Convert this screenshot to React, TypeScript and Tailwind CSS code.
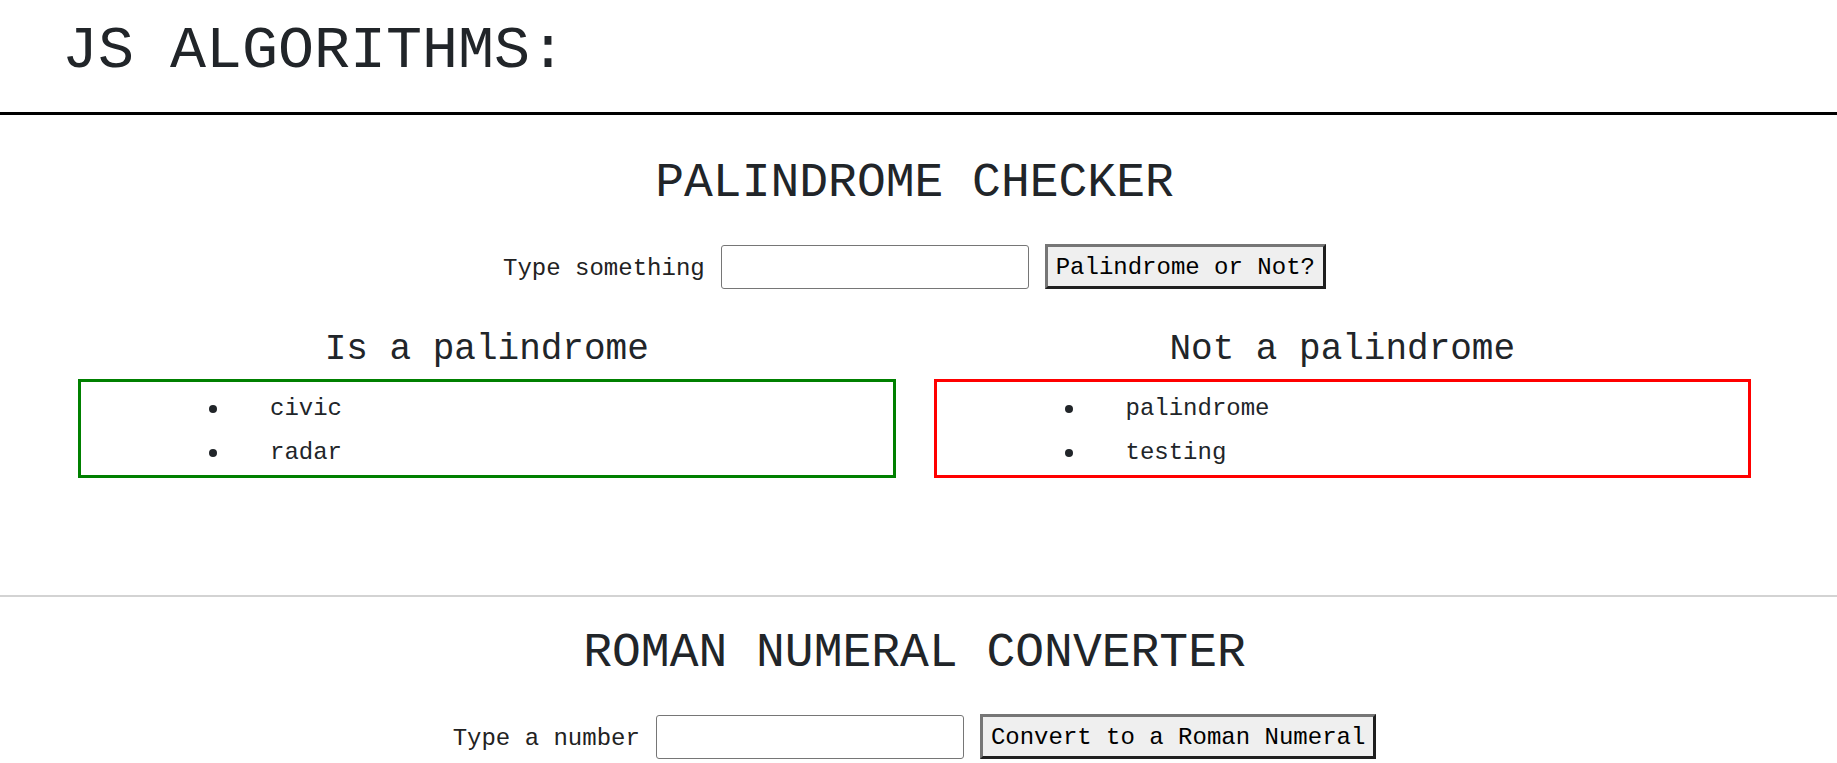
const mono = "font-['Liberation_Mono','DejaVu_Sans_Mono',monospace]";

const isPal = ["civic", "radar"];
const notPal = ["palindrome", "testing"];

const ResultBox = ({
  title,
  items,
  border,
}: {
  title: string;
  items: string[];
  border: string;
}) => {
  return (
    <div className="flex flex-col">
      <h3 className="mt-[43px] text-center text-[36px] leading-none text-[#212529]">
        {title}
      </h3>
      <ul className={`mt-[11px] border-[3px] ${border} pt-[5px]`}>
        {items.map((item) => (
          <li key={item} className="flex h-[44px] items-center pl-[128px]">
            <span className="h-[8px] w-[8px] rounded-full bg-[#212529]" />
            <span className="ml-[53px] text-[24px] leading-[44px] text-[#212529]">
              {item}
            </span>
          </li>
        ))}
      </ul>
    </div>
  );
};

const InputRow = ({ label, button }: { label: string; button: string }) => {
  return (
    <div className="mt-[37px] flex items-center justify-center gap-4">
      <label className="pt-[5px] text-[24px] leading-none text-[#222]">
        {label}
      </label>
      <input
        type="text"
        className="h-[44px] w-[308px] rounded-[3px] border border-[#767676] bg-white outline-none"
      />
      <button className="flex h-[45px] items-center border-[3px] border-t-[#767676] border-l-[#767676] border-r-[#1f1f1f] border-b-[#1f1f1f] bg-[#efefef] px-[8px] pt-[2px] text-[24px] leading-none text-black">
        {button}
      </button>
    </div>
  );
};

export default function App() {
  return (
    <div className={`min-h-screen w-full bg-white ${mono}`}>
      <header className="h-[115px] border-b-[3px] border-black pl-[62px] pt-[21px]">
        <h1 className="text-[60px] leading-none text-[#212529]">JS ALGORITHMS:</h1>
      </header>

      <section className="pr-[8px]">
        <h2 className="mt-[44px] text-center text-[48px] leading-none text-[#212529]">
          PALINDROME CHECKER
        </h2>
        <InputRow label="Type something" button="Palindrome or Not?" />
        <div className="mx-[78px] grid grid-cols-2 gap-[38px]">
          <ResultBox title="Is a palindrome" items={isPal} border="border-[#008000]" />
          <ResultBox title="Not a palindrome" items={notPal} border="border-[#ff0000]" />
        </div>
      </section>

      <div className="mt-[117px] h-[2px] w-full bg-[#d3d3d3]" />

      <section className="pr-[8px]">
        <h2 className="mt-[32px] text-center text-[48px] leading-none text-[#212529]">
          ROMAN NUMERAL CONVERTER
        </h2>
        <InputRow label="Type a number" button="Convert to a Roman Numeral" />
      </section>
    </div>
  );
}
